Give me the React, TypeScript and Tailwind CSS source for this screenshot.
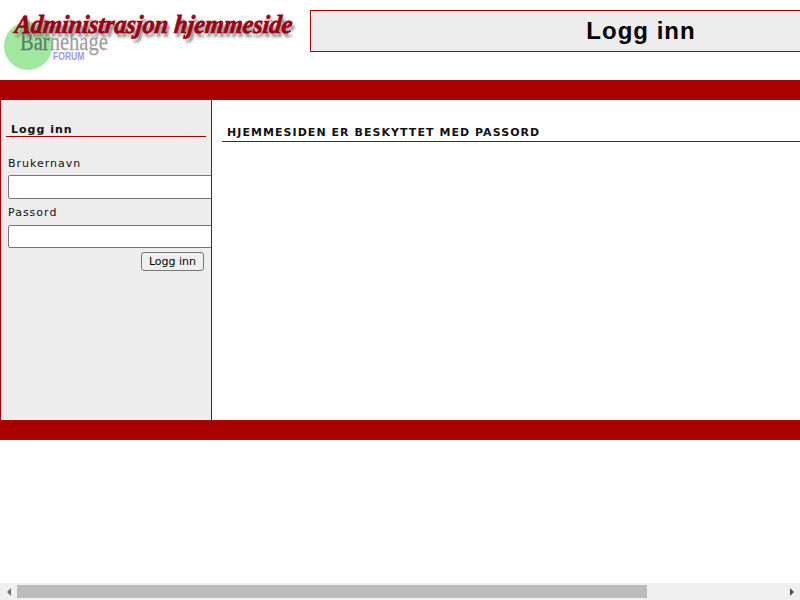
import React from 'react';

const dejavu = "font-['DejaVu_Sans',Verdana,sans-serif]";

function Logo() {
  return (
    <div className="relative w-[310px] h-20 shrink-0 overflow-hidden">
      <div className="absolute left-[4px] top-[22px] w-12 h-12 rounded-full bg-[#a0e8a0]" />
      <span className="absolute left-[20px] top-[26px] font-['Liberation_Serif',serif] text-[26px] leading-8 text-[#a0a0a0] [-webkit-text-stroke:0.3px_currentColor] scale-x-[0.79] origin-left whitespace-nowrap">
        <span className="text-[#5f7a68]">Bar</span>nehage
      </span>
      <span className="absolute left-[53px] top-[49px] font-['Liberation_Sans',sans-serif] font-bold text-[11px] leading-[14px] text-[#9a9ae6] scale-x-[0.78] origin-left">
        FORUM
      </span>
      <span className="absolute left-[15px] top-[9px] font-['Liberation_Serif',serif] font-bold italic text-[26px] leading-8 text-[#9c0010] [-webkit-text-stroke:0.7px_#9c0010] scale-x-[0.93] -skew-x-6 origin-left whitespace-nowrap [text-shadow:3px_4px_3px_#808080]">
        Administrasjon hjemmeside
      </span>
    </div>
  );
}

function Sidebar() {
  return (
    <aside className={`w-[212px] shrink-0 h-[320px] bg-[#ededed] border-x border-[#aa0000] overflow-hidden ${dejavu} text-[11px] text-[#111111]`}>
      <div className="mt-[23px] mx-[5px] border-b border-[#aa0000] pl-[5px] leading-[13px] font-bold tracking-[1px]">
        Logg inn
      </div>
      <label className="block mt-[20px] ml-[7px] leading-[14px] tracking-[1px]">Brukernavn</label>
      <input className="block mt-[4px] ml-[7px] w-[240px] h-6 bg-white border border-[#767676] rounded-[2px]" />
      <label className="block mt-[7px] ml-[7px] leading-[14px] tracking-[1px]">Passord</label>
      <input className="block mt-[5px] ml-[7px] w-[240px] h-[23px] bg-white border border-[#767676] rounded-[2px]" />
      <div className="flex justify-end mt-[4px] mr-[7px]">
        <button className="w-[63px] h-[19px] bg-[#efefef] border border-[#767676] rounded-[3px] text-[11px] leading-[17px] text-black">
          Logg inn
        </button>
      </div>
    </aside>
  );
}

function Scrollbar() {
  return (
    <div className="h-[17px] shrink-0 flex items-center bg-[#f0f0f0]">
      <div className="w-[17px] flex justify-center">
        <div className="w-0 h-0 border-y-[4px] border-y-transparent border-r-[4px] border-r-[#707070]" />
      </div>
      <div className="w-[630px] h-[13px] bg-[#bcbcbc]" />
      <div className="flex-1" />
      <div className="w-[17px] flex justify-center">
        <div className="w-0 h-0 border-y-[4px] border-y-transparent border-l-[4px] border-l-[#505050]" />
      </div>
    </div>
  );
}

export default function App() {
  return (
    <div className="w-[800px] h-[600px] flex flex-col overflow-hidden bg-white">
      <div className="flex-1 overflow-hidden">
        <div className="w-[973px]">
          <header className="flex h-20">
            <Logo />
            <div className="flex-1 mt-[10px] mr-[2px] h-[42px] pl-[1px] flex items-center justify-center bg-[#ededed] border border-[#aa0000] font-['Liberation_Sans',Arial,sans-serif] font-bold text-[24px] tracking-[1px] text-black">
              Logg inn
            </div>
          </header>
          <div className="h-5 bg-[#a90000]" />
          <div className="flex">
            <Sidebar />
            <main className="flex-1 pl-[10px] pt-[26px]">
              <h1 className={`border-b border-[#aa0000] pl-[5px] pb-[1px] leading-[14px] ${dejavu} font-bold text-[11px] tracking-[1.05px] text-[#111111]`}>
                HJEMMESIDEN ER BESKYTTET MED PASSORD
              </h1>
            </main>
          </div>
          <div className="h-5 bg-[#a90000]" />
        </div>
      </div>
      <Scrollbar />
    </div>
  );
}
